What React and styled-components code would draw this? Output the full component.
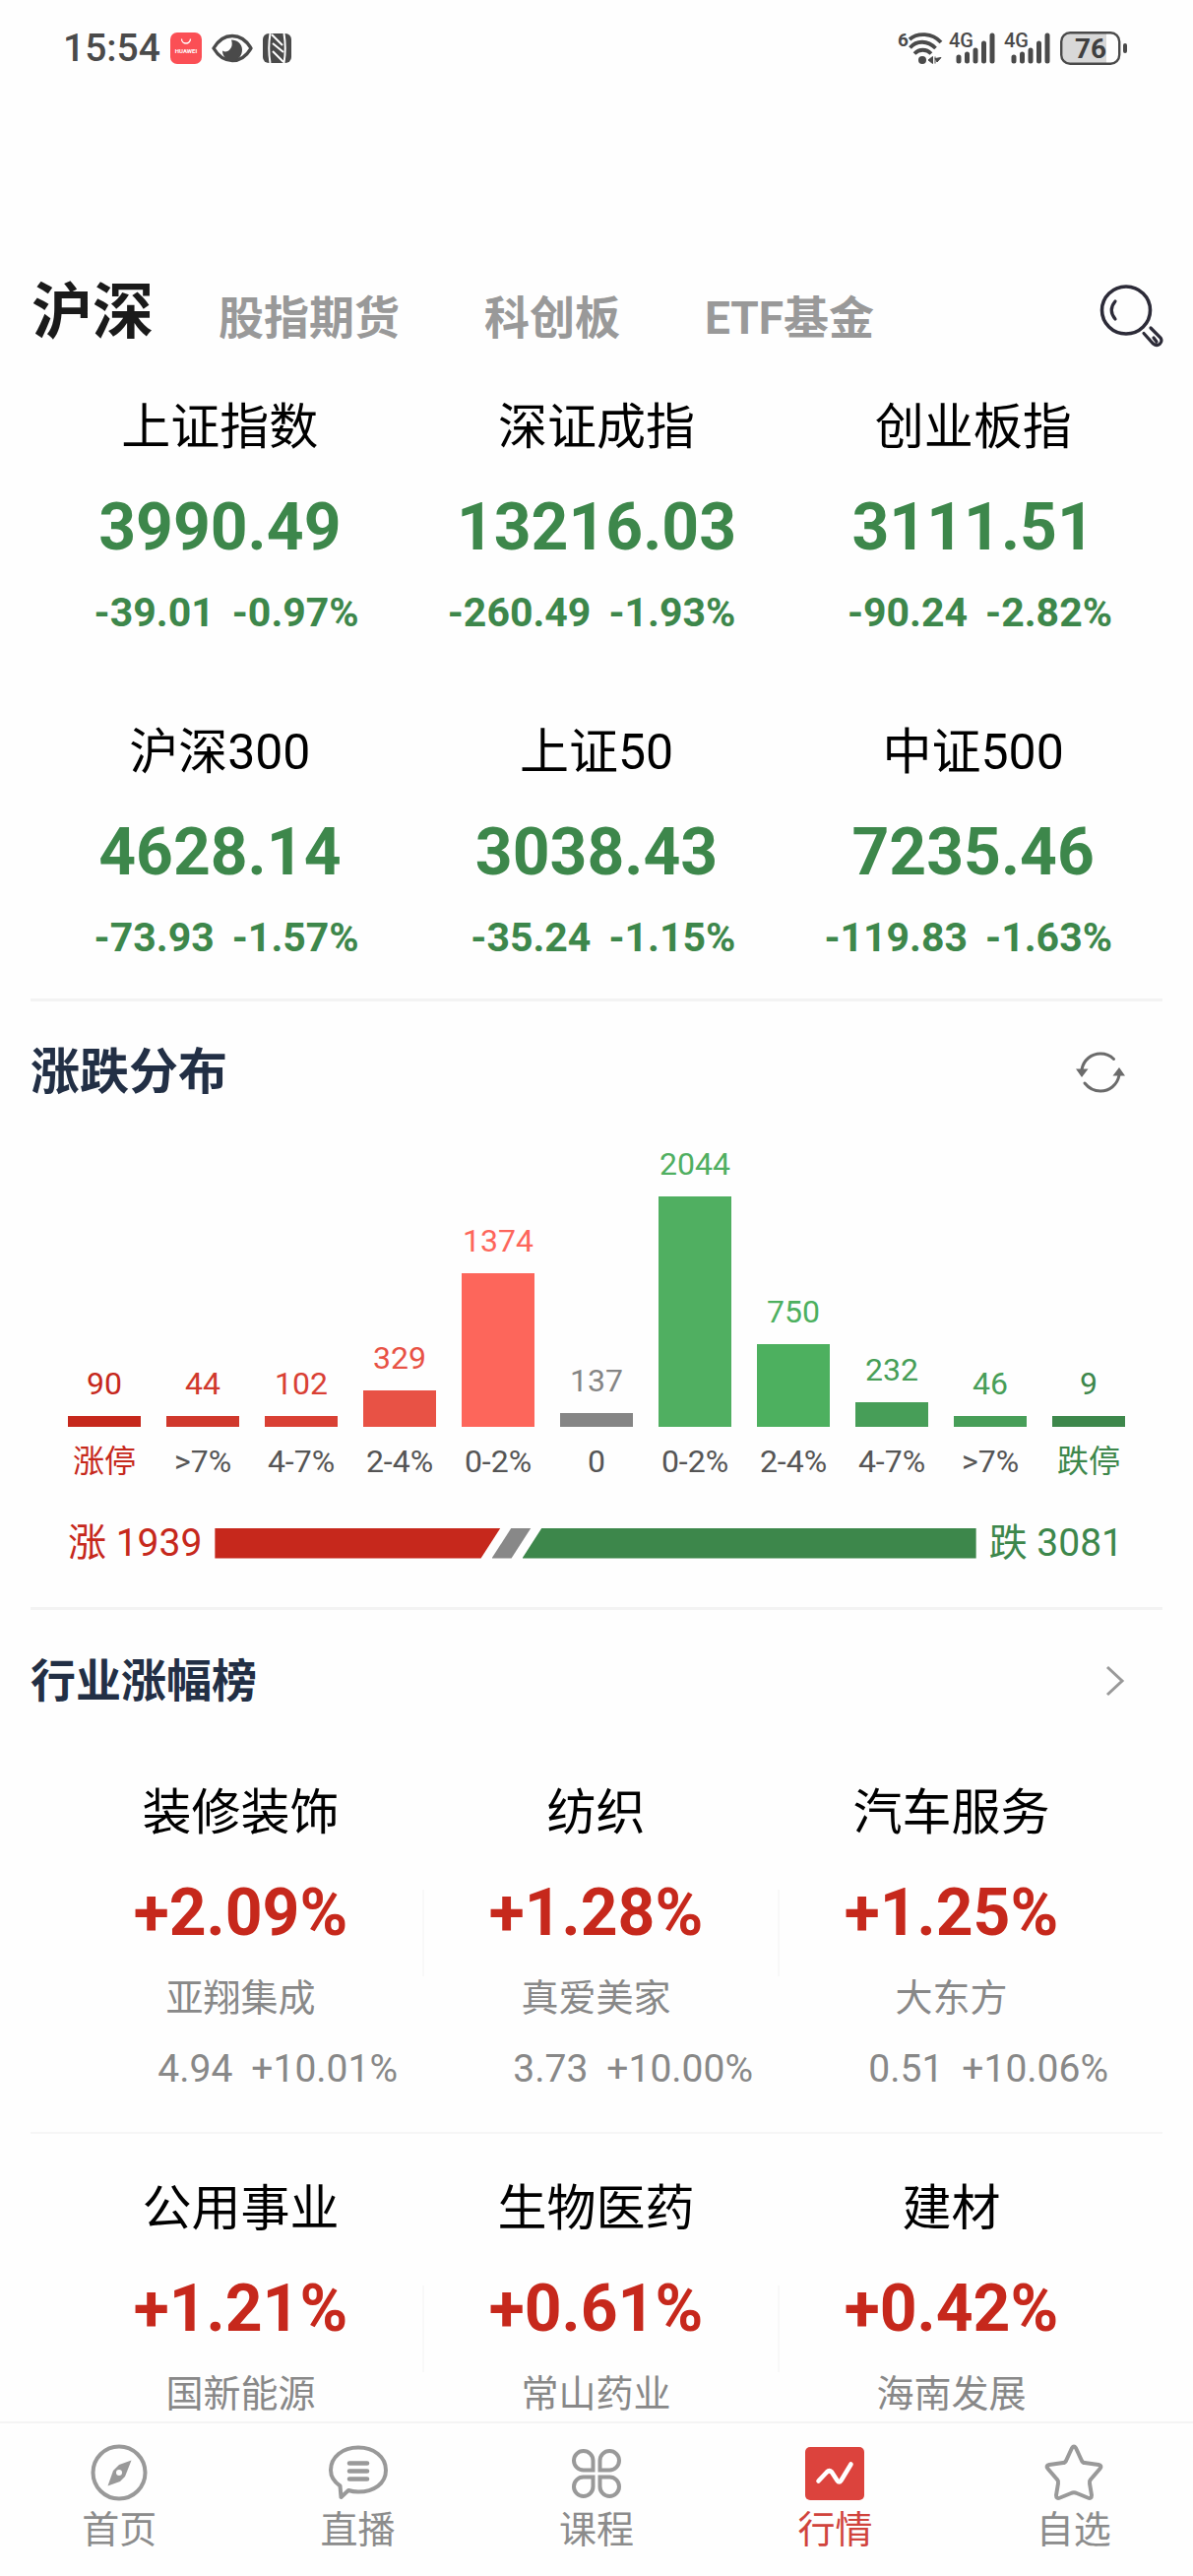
import React from "react";
import styled, { createGlobalStyle } from "styled-components";

const GlobalStyle = createGlobalStyle`
  * { box-sizing: border-box; }
  body {
    margin: 0;
    background: #fefefe;
    color: #000;
    font-family: Roboto, "Noto Sans CJK SC", sans-serif;
  }
  h1, h2, h3, p, ul { margin: 0; padding: 0; font-weight: 400; }
  button { border: 0; padding: 0; background: none; font: inherit; color: inherit; cursor: pointer; }
  svg { display: block; flex: none; overflow: visible; }
`;

const RED = "#c6281c";
const GREEN = "#3d874b";

const Page = styled.div`
  display: flex;
  flex-direction: column;
  min-height: 100vh;
`;

const StatusBar = styled.div`
  display: flex;
  align-items: center;
  justify-content: space-between;
  height: 98px;
  padding: 0 67px 0 64px;
  color: #4a4a4a;
`;

const StatusGroup = styled.div`
  display: flex;
  align-items: center;
  gap: 10px;
`;

const Clock = styled.span`
  font-size: 39px;
  line-height: 48px;
  font-weight: 500;
`;

const TopBar = styled.header`
  display: flex;
  align-items: center;
  justify-content: space-between;
  margin-top: 174px;
  padding: 0 30px 0 32px;
`;

const Tabs = styled.nav`
  display: flex;
  align-items: baseline;
  gap: 86px;
`;

const Tab = styled.button`
  font-size: 46px;
  line-height: 92px;
  font-weight: 700;
  color: #999;
`;

const ActiveTab = styled(Tab)`
  font-size: 62px;
  margin-right: -20px;
  color: #1a1a1a;
`;

const IndexGrid = styled.section`
  display: grid;
  grid-template-columns: repeat(3, 1fr);
  row-gap: 78px;
  padding: 29px 32px 34px;
`;

const IndexCard = styled.article`
  display: flex;
  flex-direction: column;
  align-items: center;
`;

const Name = styled.h3`
  font-size: 50px;
  line-height: 72px;
`;

const BigValue = styled.p`
  margin-top: 26px;
  font-size: 66px;
  line-height: 80px;
  font-weight: 700;
  color: ${(p) => p.$color};
`;

const Changes = styled.p`
  display: flex;
  align-self: flex-end;
  gap: 18px;
  margin-top: 18px;
  padding-right: 50px;
  font-size: 41px;
  line-height: 56px;
  font-weight: 700;
  color: ${GREEN};
`;

const Divider = styled.hr`
  width: auto;
  height: 3px;
  margin: 0 31px;
  border: 0;
  background: #f3f3f3;
`;

const SectionHead = styled.div`
  display: flex;
  align-items: center;
  justify-content: space-between;
  padding: 36px 69px 0 31px;
`;

const SectionTitle = styled.h2`
  font-size: ${(p) => (p.$small ? 46 : 50)}px;
  line-height: 72px;
  font-weight: 700;
  color: #222f45;
`;

const Chart = styled.div`
  display: flex;
  align-items: flex-end;
  gap: 26px;
  padding: 37px 69px 0;
`;

const BarColumn = styled.div`
  display: flex;
  flex: 1 1 0;
  flex-direction: column;
  align-items: center;
  min-width: 0;
  font-size: 32px;
  line-height: 40px;
  white-space: nowrap;
  color: ${(p) => p.$color};
`;

const Bar = styled.div`
  align-self: stretch;
  margin: 13px 0 15px;
  background: currentColor;
`;

const BarLabel = styled.span`
  color: ${(p) => p.$color || "#555"};
`;

const Balance = styled.div`
  display: flex;
  align-items: center;
  gap: 13px;
  padding: 35px 71px 37px 69px;
`;

const BalanceText = styled.span`
  font-size: 39px;
  line-height: 56px;
  color: ${(p) => p.$color};
`;

const BalanceTrack = styled.div`
  display: flex;
  flex: 1;
  height: 31px;
`;

const slant = {
  first: "polygon(0 0, 100% 0, calc(100% - 20px) 100%, 0 100%)",
  middle: "polygon(20px 0, 100% 0, calc(100% - 20px) 100%, 0 100%)",
  last: "polygon(20px 0, 100% 0, 100% 100%, 0 100%)",
};

const BalancePart = styled.div`
  flex: ${(p) => p.$share} 1 0;
  margin-left: ${(p) => (p.$shape === "first" ? 0 : -9)}px;
  min-width: 40px;
  background: ${(p) => p.$color};
  clip-path: ${(p) => slant[p.$shape]};
`;

const IndustryGrid = styled.section`
  display: grid;
  grid-template-columns: repeat(3, 1fr);
  margin: 62px 59px 0 70px;
`;

const IndustryCard = styled.article`
  display: flex;
  align-items: flex-start;
`;

const IndustryBody = styled.div`
  display: flex;
  flex: 1;
  flex-direction: column;
  align-items: center;
`;

const IndustryRule = styled.span`
  width: 2px;
  height: 88px;
  margin: 114px 0 0 10px;
  background: ${(p) => (p.$hidden ? "transparent" : "#f8f8f8")};
`;

const Company = styled.p`
  margin-top: 18px;
  font-size: 38px;
  line-height: 56px;
  color: #888;
`;

const Quote = styled.p`
  display: flex;
  align-self: flex-end;
  gap: 19px;
  margin-top: 16px;
  padding-right: 15px;
  font-size: 39px;
  line-height: 56px;
  color: #888;
`;

const RowDivider = styled.hr`
  height: 2px;
  width: auto;
  margin: 36px 31px -22px;
  border: 0;
  background: #f6f6f6;
`;

const BottomNav = styled.nav`
  position: sticky;
  bottom: 0;
  display: grid;
  grid-template-columns: repeat(5, 1fr);
  height: 157px;
  margin-top: auto;
  border-top: 2px solid #f4f4f4;
  background: #fefefe;
`;

const NavLink = styled.a`
  display: flex;
  flex-direction: column;
  align-items: center;
  padding-top: 20px;
  font-size: 38px;
  line-height: 52px;
  text-decoration: none;
  color: ${(p) => (p.$active ? "#d0433c" : "#8c8c8c")};
`;

const indices = [
  ["上证指数", "3990.49", "-39.01", "-0.97%"],
  ["深证成指", "13216.03", "-260.49", "-1.93%"],
  ["创业板指", "3111.51", "-90.24", "-2.82%"],
  ["沪深300", "4628.14", "-73.93", "-1.57%"],
  ["上证50", "3038.43", "-35.24", "-1.15%"],
  ["中证500", "7235.46", "-119.83", "-1.63%"],
];

const bars = [
  { count: 90, label: "涨停", height: 11, color: RED, labelColor: RED },
  { count: 44, label: ">7%", height: 11, color: "#d0382c" },
  { count: 102, label: "4-7%", height: 11, color: "#d94034" },
  { count: 329, label: "2-4%", height: 37, color: "#e85245" },
  { count: 1374, label: "0-2%", height: 156, color: "#fd665b" },
  { count: 137, label: "0", height: 14, color: "#858585" },
  { count: 2044, label: "0-2%", height: 234, color: "#50af61" },
  { count: 750, label: "2-4%", height: 84, color: "#4db05f" },
  { count: 232, label: "4-7%", height: 25, color: "#479e58" },
  { count: 46, label: ">7%", height: 11, color: "#479e58" },
  { count: 9, label: "跌停", height: 11, color: GREEN, labelColor: GREEN },
];

const industries = [
  [
    ["装修装饰", "+2.09%", "亚翔集成", "4.94", "+10.01%"],
    ["纺织", "+1.28%", "真爱美家", "3.73", "+10.00%"],
    ["汽车服务", "+1.25%", "大东方", "0.51", "+10.06%"],
  ],
  [
    ["公用事业", "+1.21%", "国新能源"],
    ["生物医药", "+0.61%", "常山药业"],
    ["建材", "+0.42%", "海南发展"],
  ],
];

function AppBadge() {
  return (
    <svg width="32" height="32" viewBox="0 0 32 32">
      <rect width="32" height="32" rx="7" fill="#fb4f55" />
      <path d="M11.5 6.500a4.500 4.500 0 0 0 9 0" fill="none" stroke="#fff" strokeWidth="1.300" />
      <text x="16" y="20.500" textAnchor="middle" fontSize="6" fontWeight="700" fill="#fff">HUAWEI</text>
    </svg>
  );
}

function EyeIcon() {
  return (
    <svg width="42" height="30" viewBox="0 0 42 30">
      <path d="M2 15C7 6.500 13.500 2.500 21 2.500S35 6.500 40 15C35 23.500 28.500 27.500 21 27.500S7 23.500 2 15Z" fill="none" stroke="#4a4a4a" strokeWidth="3.400" strokeLinejoin="round" />
      <path d="M20 6.500c6 0 11 4 11 10 0 6-4 11-10 11s-10-4.500-10-10c2 1.300 5 1.300 7-.700 2.600-2.500 3.500-5.500 2-10.300Z" fill="#4a4a4a" />
    </svg>
  );
}

function NfcIcon() {
  return (
    <svg width="29" height="30" viewBox="0 0 29 30">
      <rect width="29" height="30" rx="6" fill="#4a4a4a" />
      <path d="M7.500 0C6 9 6 21 7.500 30M21.500 0C23 9 23 21 21.500 30" fill="none" stroke="#fefefe" strokeWidth="2" />
      <path d="M9 1 20 12M10 10l11 9M10 18l11 11" fill="none" stroke="#fefefe" strokeWidth="2" />
    </svg>
  );
}

function WifiIcon() {
  return (
    <svg width="42" height="34" viewBox="0 0 42 34">
      <text x="-1" y="15" fontSize="19" fontWeight="700" fill="#4a4a4a">6</text>
      <g fill="none" stroke="#4a4a4a" strokeWidth="3.800">
        <path d="M11 8c8-7 23-7 32 3M11.500 16.500c7-8 18-7.500 26 .5M16 22.500c5-5 12-5 17 0" />
      </g>
      <circle cx="24" cy="29" r="4" fill="#4a4a4a" />
      <path d="M30 29l4.500-3.500v7zM37 25.500v7M37 27.500l6-1-4 4.500z" fill="#4a4a4a" stroke="#4a4a4a" strokeWidth="1" />
    </svg>
  );
}

function SignalIcon() {
  return (
    <svg width="46" height="34" viewBox="0 0 46 34">
      <text x="-1" y="16" fontSize="20" fontWeight="500" fill="#4a4a4a">4G</text>
      <g stroke="#4a4a4a" strokeWidth="5" strokeLinecap="round">
        <path d="M9 26v4M17.500 23v7M26 19v11M34.500 12v18M43 4v26" />
      </g>
    </svg>
  );
}

function BatteryIcon() {
  return (
    <svg width="68" height="34" viewBox="0 0 68 34">
      <path d="M11 2h36v30H11a9 9 0 0 1-9-9V11a9 9 0 0 1 9-9Z" fill="#d8d8d8" />
      <rect x="1.200" y="1.200" width="59" height="31.600" rx="9" fill="none" stroke="#4a4a4a" strokeWidth="2.400" />
      <rect x="64" y="12" width="4" height="10" rx="2" fill="#4a4a4a" />
      <text x="31" y="27" textAnchor="middle" fontSize="28" fontWeight="700" fill="#404040">76</text>
    </svg>
  );
}

function SearchIcon() {
  return (
    <svg width="64" height="64" viewBox="0 0 64 64" fill="none" stroke="#2c2b38" strokeLinecap="round">
      <ellipse cx="26" cy="26" rx="24.500" ry="24" strokeWidth="3.600" />
      <path d="M15 17c-5 6-5 12 0 18" strokeWidth="3.200" />
      <path d="M44 49.500l9.500 10.500c5 4 10.500-1.500 7.500-6L51 44M57 58l-3-4" strokeWidth="3.200" />
    </svg>
  );
}

function RefreshIcon() {
  return (
    <svg width="50" height="42" viewBox="0 0 50 42" fill="none" stroke="#6b6b6b" strokeWidth="3" strokeLinecap="round">
      <path d="M6 18C8 8 16 2 25 2c5.500 0 10 2 13.500 5.500M44 24C42 34 34 40 25 40c-7 0-12-3-16-8" />
      <path d="M0 17.500h12.500L6 26ZM37.500 24.500H50L44 16Z" fill="#6b6b6b" stroke="none" />
    </svg>
  );
}

function ChevronIcon() {
  return (
    <svg width="20" height="30" viewBox="0 0 20 30" fill="none" stroke="#999" strokeWidth="3">
      <path d="M2 1l15 14L2 29" />
    </svg>
  );
}

function NavIcon({ kind }) {
  const common = {
    width: 62,
    height: 62,
    viewBox: "0 0 62 62",
    fill: "none",
    stroke: "#999",
    strokeWidth: 4,
    strokeLinejoin: "round",
    strokeLinecap: "round",
  };
  if (kind === "home")
    return (
      <svg {...common}>
        <circle cx="31" cy="30" r="26.500" />
        <path d="M43.500 17.500 37 34l-5 5-12.500 4.500L25 28l6-6Z" fill="#999" stroke="none" />
        <circle cx="31" cy="30" r="3" fill="#fefefe" stroke="none" />
      </svg>
    );
  if (kind === "live")
    return (
      <svg {...common}>
        <path d="M12.500 43.500C6 39 3 33.500 3 27.500 3 14 15 4.500 31 4.500s28 9.500 28 23-12 22-28 22c-4 0-7-.5-10-1.500L13.500 55Z" />
        <path d="M22 20.500h18M22 28.500h18M22 36.500h18" strokeWidth="4.600" />
      </svg>
    );
  if (kind === "course")
    return (
      <svg {...common} strokeLinejoin="miter">
        <path d="M27.500 27.500H17.750A9.750 9.750 0 1 1 27.500 17.750ZM34.500 27.500V17.750A9.750 9.750 0 1 1 44.250 27.500ZM27.500 34.500V44.250A9.750 9.750 0 1 1 17.750 34.500ZM34.500 34.500H44.250A9.750 9.750 0 1 1 34.500 44.250Z" />
      </svg>
    );
  if (kind === "market")
    return (
      <svg {...common}>
        <rect x="1" y="4" width="60" height="54" rx="5" fill="#dc433d" stroke="none" />
        <path d="M14.500 38.500l8.500-9q2.500-2.500 5 0l5.500 8.500q2 3 4 0L47.500 21.500" stroke="#fff" strokeWidth="4.600" />
      </svg>
    );
  return (
    <svg {...common}>
      <path d="M29 5q2-3 4 0l6 13q1 2 3 2l14 2q4 1 1.500 4L48 37q-1.500 1.500-1 4l2 12q0 4-4 2.500L34 51q-3-1.500-6 0l-11 4.500q-4 1.500-4-2.500l2-12q.5-2.500-1-4L4.500 26Q2 23 6 22l14-2q2 0 3-2Z" />
    </svg>
  );
}

const navItems = [
  ["home", "首页"],
  ["live", "直播"],
  ["course", "课程"],
  ["market", "行情"],
  ["star", "自选"],
];

function IndustryRow({ cards }) {
  return (
    <IndustryGrid>
      {cards.map(([name, change, company, price, gain], i) => (
        <IndustryCard key={name}>
          <IndustryBody>
            <Name>{name}</Name>
            <BigValue $color={RED}>{change}</BigValue>
            <Company>{company}</Company>
            {price && (
              <Quote>
                <span>{price}</span>
                <span>{gain}</span>
              </Quote>
            )}
          </IndustryBody>
          <IndustryRule $hidden={i === cards.length - 1} />
        </IndustryCard>
      ))}
    </IndustryGrid>
  );
}

export default function App() {
  return (
    <Page>
      <GlobalStyle />
      <StatusBar>
        <StatusGroup>
          <Clock>15:54</Clock>
          <AppBadge />
          <EyeIcon />
          <NfcIcon />
        </StatusGroup>
        <StatusGroup>
          <WifiIcon />
          <SignalIcon />
          <SignalIcon />
          <BatteryIcon />
        </StatusGroup>
      </StatusBar>

      <TopBar>
        <Tabs>
          <ActiveTab type="button">沪深</ActiveTab>
          <Tab type="button">股指期货</Tab>
          <Tab type="button">科创板</Tab>
          <Tab type="button">ETF基金</Tab>
        </Tabs>
        <button type="button" aria-label="搜索">
          <SearchIcon />
        </button>
      </TopBar>

      <IndexGrid>
        {indices.map(([name, value, diff, percent]) => (
          <IndexCard key={name}>
            <Name>{name}</Name>
            <BigValue $color={GREEN}>{value}</BigValue>
            <Changes>
              <span>{diff}</span>
              <span>{percent}</span>
            </Changes>
          </IndexCard>
        ))}
      </IndexGrid>

      <Divider />
      <SectionHead>
        <SectionTitle>涨跌分布</SectionTitle>
        <button type="button" aria-label="刷新">
          <RefreshIcon />
        </button>
      </SectionHead>
      <Chart>
        {bars.map((bar, i) => (
          <BarColumn key={i} $color={bar.color}>
            <span>{bar.count}</span>
            <Bar style={{ height: bar.height }} />
            <BarLabel $color={bar.labelColor}>{bar.label}</BarLabel>
          </BarColumn>
        ))}
      </Chart>
      <Balance>
        <BalanceText $color={RED}>涨 1939</BalanceText>
        <BalanceTrack>
          <BalancePart $share={1939} $color={RED} $shape="first" />
          <BalancePart $share={137} $color="#888" $shape="middle" />
          <BalancePart $share={3081} $color={GREEN} $shape="last" />
        </BalanceTrack>
        <BalanceText $color={GREEN}>跌 3081</BalanceText>
      </Balance>

      <Divider />
      <SectionHead>
        <SectionTitle $small>行业涨幅榜</SectionTitle>
        <button type="button" aria-label="更多行业">
          <ChevronIcon />
        </button>
      </SectionHead>
      <IndustryRow cards={industries[0]} />
      <RowDivider />
      <IndustryRow cards={industries[1]} />

      <BottomNav>
        {navItems.map(([kind, label]) => (
          <NavLink key={kind} href={`#${kind}`} $active={kind === "market"}>
            <NavIcon kind={kind} />
            {label}
          </NavLink>
        ))}
      </BottomNav>
    </Page>
  );
}
